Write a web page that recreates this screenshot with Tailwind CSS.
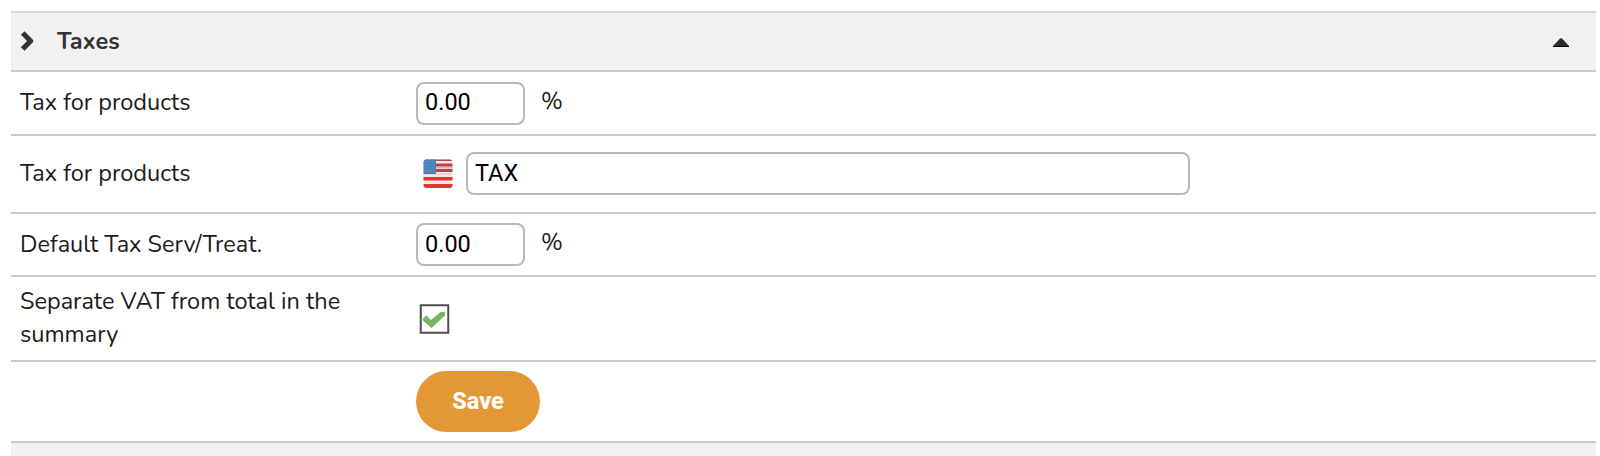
<!DOCTYPE html>
<html lang="en">
<head>
    <meta charset="UTF-8">
    <meta name="viewport" content="width=device-width, initial-scale=1.0">
    <title>Taxes</title>
    <script src="https://cdn.jsdelivr.net/npm/@tailwindcss/browser@4"></script>
</head>
<body class="bg-white h-[456px] overflow-hidden pt-[11px] pl-[11px] pr-1 font-[Nunito,Lato,sans-serif] text-[23.5px] leading-8 text-[#1c1c1c]">
    <!-- Section header -->
    <header class="h-[59px] flex items-center bg-[#f1f1f1] border-t-2 border-[#d6d6dc] pl-[9px] pr-[27px] pb-0.5 text-[#333]">
        <svg class="w-[14px] h-5" viewBox="0 0 14 20" fill="none" stroke="#333" stroke-width="5.2" stroke-linejoin="round"><path d="M2.7 2 10.6 10 2.7 18"/></svg>
        <h1 class="ml-[23px] font-bold tracking-[0.1px]">Taxes</h1>
        <svg class="ml-auto mt-[3px] w-4 h-[9px]" viewBox="0 0 16 9"><path d="M0 9V8L7 .5Q8 0 9 .5L16 8V9Z" fill="#2b2b2b"/><path d="M0 8h16v1H0z" fill="#000"/></svg>
    </header>

    <!-- Settings rows -->
    <form>
        <div class="h-16 flex items-center border-t-2 border-[#cacaca] pl-[9px]">
            <label class="w-[396px] -mt-0.5">Tax for products</label>
            <input type="text" value="0.00" class="w-[109px] h-[43px] rounded-lg border-2 border-[#b9b9b9] px-[7px] pb-0.5 font-[Roboto,sans-serif] text-[23.5px] text-black">
            <span class="ml-[16px] -mt-[5px]">%</span>
        </div>
        <div class="h-[78px] flex items-center border-t-2 border-[#cacaca] pl-[9px] pb-0.5">
            <label class="w-[396px]">Tax for products</label>
            <svg class="ml-[7px] mr-[13px] mt-0.5 w-[30px] h-[30px]" viewBox="0 0 30 30">
                <defs><clipPath id="flag"><rect x=".5" y=".5" width="29" height="28.5" rx="3"/></clipPath></defs>
                <g clip-path="url(#flag)">
                    <path d="M0 0h30v30H0z" fill="#f3e9e8"/>
                    <path d="M0 0h30v2H0zM12 4.5h18v3H12zM12 10h18v3H12z" fill="#b5454a"/>
                    <path d="M0 14.5h30v1H0z" fill="#e8c2c1"/>
                    <path d="M0 18h30v3.5H0zM0 25h30v5H0z" fill="#dd3833"/>
                    <path d="M12 8h18v1.5H12z" fill="#d7b5b5"/>
                    <path d="M0 0h13v15H0z" fill="#4a80b8"/>
                    <path d="M2 3h10M1 6h11M2 9h10M1 12h11" stroke="#7aa3cf" stroke-width="1.2" stroke-dasharray="1.5 2"/>
                </g>
            </svg>
            <input type="text" value="TAX" class="w-[724px] h-[43px] rounded-lg border-2 border-[#b9b9b9] px-[7px] font-[Roboto,sans-serif] text-[23.5px] text-black">
        </div>
        <div class="h-[63px] flex items-center border-t-2 border-[#cacaca] pl-[9px] pb-px">
            <label class="w-[396px]">Default Tax Serv/Treat.</label>
            <input type="text" value="0.00" class="w-[109px] h-[43px] rounded-lg border-2 border-[#b9b9b9] px-[7px] font-[Roboto,sans-serif] text-[23.5px] text-black">
            <span class="ml-[16px] -mt-[5px]">%</span>
        </div>
        <div class="h-[85px] flex items-center border-t-2 border-[#cacaca] pl-[9px] pb-0.5">
            <label class="w-[396px] pr-10 leading-[33px]">Separate VAT from total in the summary</label>
            <svg class="ml-[3px] mt-0.5 w-[31px] h-[30px]" viewBox="0 0 31 30">
                <rect x="1.75" y="1.25" width="27.5" height="27.5" fill="#fff" stroke="#4d4d52" stroke-width="2"/>
                <path d="M4 14.5 7.5 11.5 12 16 21.5 8H26V11.5L12.5 24 4 16.5Z" fill="#75b566"/>
            </svg>
        </div>
        <div class="h-[81px] flex items-center border-t-2 border-[#cacaca] pl-[405px]">
            <button type="button" class="w-[124px] h-[61px] rounded-full bg-[#e49735] pb-0.5 font-[Roboto,sans-serif] text-[23.5px] font-extrabold text-white">Save</button>
        </div>
    </form>

    <!-- Next section -->
    <div class="h-4 bg-[#f1f1f1] border-t-2 border-[#cacaca]"></div>
</body>
</html>
